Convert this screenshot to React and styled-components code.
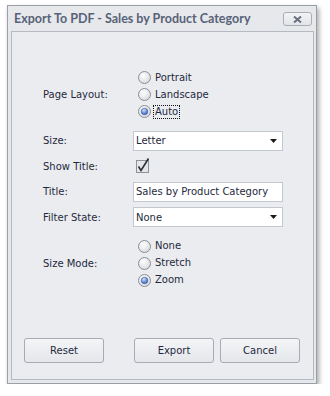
import React from "react";
import styled, { createGlobalStyle } from "styled-components";

const Global = createGlobalStyle`
  html, body { margin: 0; padding: 0; background: #ffffff; }
  body { font-family: "DejaVu Sans", sans-serif; font-size: 10px; color: #1e2a3c; }
  * { box-sizing: border-box; }
`;

const Page = styled.div`
  padding: 5px 0 0 7px;
`;

const Window = styled.div`
  width: 310px;
  height: 379px;
  background: #e6e8ec;
  border: 1px solid #9b9fa7;
  box-shadow: 2px 3px 5px rgba(0, 0, 0, 0.35);
  display: flex;
  flex-direction: column;
  padding: 0 2px 3px 3px;
`;

const TitleBar = styled.div`
  height: 25px;
  display: flex;
  align-items: center;
  justify-content: space-between;
  padding: 0 2px 0 3px;
`;

const Caption = styled.div`
  font-family: Lato, "Liberation Sans", sans-serif;
  font-weight: 700;
  font-size: 12.5px;
  color: #586277;
`;

const CloseButton = styled.div`
  width: 29px;
  height: 14px;
  border: 1px solid #a9aeb6;
  border-radius: 3px;
  background: linear-gradient(#f2f3f5, #e2e4e8);
  display: flex;
  align-items: center;
  justify-content: center;
  margin-top: 1px;
`;

const Panel = styled.div`
  flex: 1;
  background: #ebecf0;
  border: 1px solid #b5b9c1;
  display: flex;
  flex-direction: column;
  padding: 37px 12px 16px 12px;
`;

const Form = styled.div`
  display: flex;
  flex-direction: column;
  padding-left: 19px;
`;

const Row = styled.div`
  display: grid;
  grid-template-columns: 90px 150px;
  align-items: center;
  min-height: 20px;
  margin-top: ${(p) => (p.$gap ? p.$gap : 0)}px;
`;

const Label = styled.div`
  line-height: 13px;
`;

const RadioGroup = styled.div`
  display: flex;
  flex-direction: column;
  padding-left: 5px;
`;

const RadioItem = styled.div`
  height: 17px;
  display: flex;
  align-items: center;
  gap: 3px;
`;

const RadioText = styled.span`
  line-height: 12px;
  padding: 0 1px;
  border: 1px dotted ${(p) => (p.$focused ? "#111" : "transparent")};
  margin-left: -1px;
`;

const Field = styled.div`
  height: 20px;
  background: #ffffff;
  border: 1px solid #c3c7ce;
  display: flex;
  align-items: center;
  justify-content: space-between;
  padding: 0 5px 0 2px;
`;

const CheckWrap = styled.div`
  padding-left: 3px;
  height: 20px;
  display: flex;
  align-items: center;
`;

const Buttons = styled.div`
  margin-top: auto;
  display: flex;
  align-items: center;
`;

const Button = styled.div`
  width: 80px;
  height: 25px;
  border: 1px solid #a7abb3;
  border-radius: 3px;
  background: linear-gradient(#f4f5f7, #e4e6ea);
  display: flex;
  align-items: center;
  justify-content: center;
  margin-left: ${(p) => p.$ml || 0}px;
`;

const Radio = ({ checked }) => (
  <svg width="13" height="13" viewBox="0 0 13 13">
    <defs>
      <radialGradient id="rfill" cx="40%" cy="35%" r="70%">
        <stop offset="0%" stopColor="#ffffff" />
        <stop offset="100%" stopColor="#d6d8dc" />
      </radialGradient>
      <radialGradient id="rdot" cx="40%" cy="30%" r="70%">
        <stop offset="0%" stopColor="#cfe0fb" />
        <stop offset="100%" stopColor="#2f62bd" />
      </radialGradient>
    </defs>
    <circle cx="6.5" cy="6.5" r="6" fill="url(#rfill)" stroke="#8a8e96" strokeWidth="1" />
    {checked && <circle cx="6.5" cy="6.5" r="3.3" fill="url(#rdot)" stroke="#3c5f9c" strokeWidth="0.6" />}
  </svg>
);

const Check = () => (
  <svg width="13" height="13" viewBox="0 0 13 13" style={{ overflow: "visible" }}>
    <rect x="0.5" y="0.5" width="12" height="12" fill="#e4e5e8" stroke="#8d9199" />
    <path d="M2.5 6.5 L5 10.5 L12.5 -1.5" fill="none" stroke="#2b2f36" strokeWidth="1.6" />
  </svg>
);

const Arrow = () => (
  <svg width="7" height="4" viewBox="0 0 7 4">
    <path d="M0 0 H7 L3.5 4 Z" fill="#1b1b1b" />
  </svg>
);

const XIcon = () => (
  <svg width="9" height="7" viewBox="0 0 9 7">
    <path d="M1 0.5 L8 6.5 M8 0.5 L1 6.5" stroke="#6a7080" strokeWidth="2" />
  </svg>
);

export default function App() {
  return (
    <>
      <Global />
      <Page>
        <Window>
          <TitleBar>
            <Caption>Export To PDF - Sales by Product Category</Caption>
            <CloseButton>
              <XIcon />
            </CloseButton>
          </TitleBar>
          <Panel>
            <Form>
              <Row>
                <Label>Page Layout:</Label>
                <RadioGroup>
                  <RadioItem><Radio /><RadioText>Portrait</RadioText></RadioItem>
                  <RadioItem><Radio /><RadioText>Landscape</RadioText></RadioItem>
                  <RadioItem><Radio checked /><RadioText $focused>Auto</RadioText></RadioItem>
                </RadioGroup>
              </Row>
              <Row $gap={10.5}>
                <Label>Size:</Label>
                <Field>Letter<Arrow /></Field>
              </Row>
              <Row $gap={5.5}>
                <Label>Show Title:</Label>
                <CheckWrap><Check /></CheckWrap>
              </Row>
              <Row $gap={5.5}>
                <Label>Title:</Label>
                <Field>Sales by Product Category</Field>
              </Row>
              <Row $gap={5.5}>
                <Label>Filter State:</Label>
                <Field>None<Arrow /></Field>
              </Row>
              <Row $gap={10.5}>
                <Label>Size Mode:</Label>
                <RadioGroup>
                  <RadioItem><Radio /><RadioText>None</RadioText></RadioItem>
                  <RadioItem><Radio /><RadioText>Stretch</RadioText></RadioItem>
                  <RadioItem><Radio checked /><RadioText>Zoom</RadioText></RadioItem>
                </RadioGroup>
              </Row>
            </Form>
            <Buttons>
              <Button>Reset</Button>
              <Button $ml={30}>Export</Button>
              <Button $ml={6}>Cancel</Button>
            </Buttons>
          </Panel>
        </Window>
      </Page>
    </>
  );
}
